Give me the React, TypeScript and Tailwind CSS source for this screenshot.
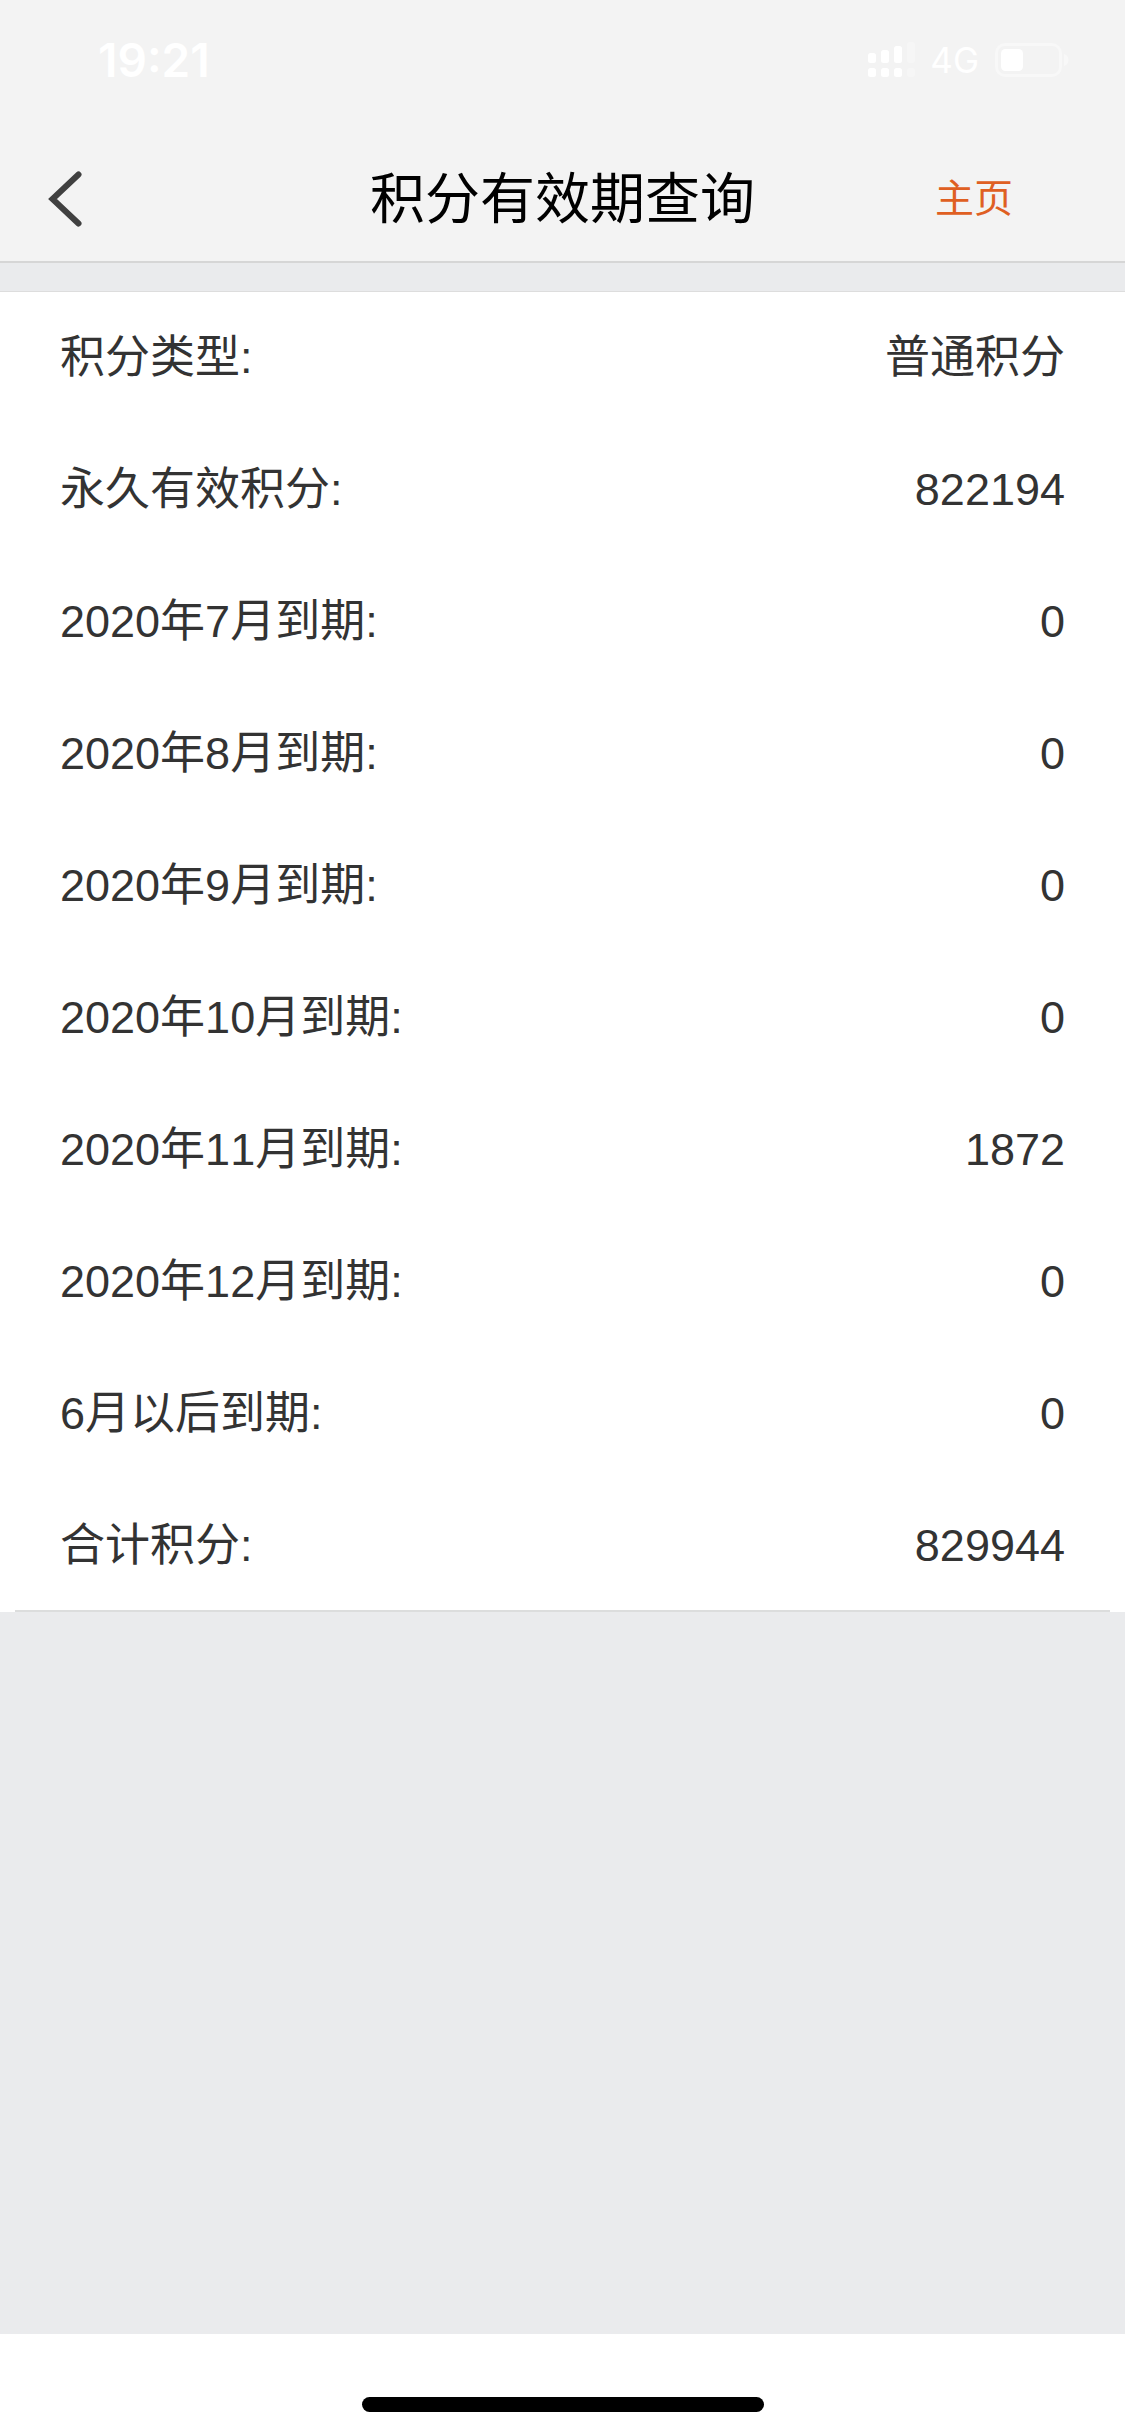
interface PointsRow {
  label: string;
  value: string;
}

const rows: PointsRow[] = [
  { label: '积分类型:', value: '普通积分' },
  { label: '永久有效积分:', value: '822194' },
  { label: '2020年7月到期:', value: '0' },
  { label: '2020年8月到期:', value: '0' },
  { label: '2020年9月到期:', value: '0' },
  { label: '2020年10月到期:', value: '0' },
  { label: '2020年11月到期:', value: '1872' },
  { label: '2020年12月到期:', value: '0' },
  { label: '6月以后到期:', value: '0' },
  { label: '合计积分:', value: '829944' },
];

function SignalIcon() {
  return (
    <svg width="48" height="36" viewBox="0 0 48 36" fill="currentColor" aria-hidden="true">
      <rect x="0" y="11" width="8" height="10" rx="2.5" />
      <rect x="13" y="8" width="8" height="13" rx="2.5" />
      <rect x="26" y="4" width="8" height="17" rx="2.5" />
      <rect x="39" y="0" width="8" height="21" rx="2.5" opacity="0.25" />
      <rect x="0" y="26" width="8" height="9" rx="2.5" />
      <rect x="13" y="26" width="8" height="9" rx="2.5" />
      <rect x="26" y="26" width="8" height="9" rx="2.5" />
      <rect x="39" y="26" width="8" height="9" rx="2.5" opacity="0.25" />
    </svg>
  );
}

function BatteryIcon() {
  return (
    <svg width="74" height="34" viewBox="0 0 74 34" aria-hidden="true">
      <rect x="1.5" y="1.5" width="64" height="31" rx="8.5" fill="none" stroke="currentColor" strokeWidth="3" opacity="0.4" />
      <path d="M69 11c3 1 4.5 3 4.5 6s-1.5 5-4.5 6z" fill="currentColor" opacity="0.45" />
      <rect x="6" y="6" width="22" height="22" rx="4.5" fill="currentColor" />
    </svg>
  );
}

function StatusBar() {
  return (
    <div className="flex h-[120px] items-center justify-between pr-14 pl-[98px] font-['Inter',sans-serif] text-white">
      <span className="text-[46px] leading-[48px] font-semibold">19:21</span>
      <div className="flex items-center">
        <SignalIcon />
        <span className="ml-3.5 text-[35px] leading-10">4G</span>
        <span className="ml-4">
          <BatteryIcon />
        </span>
      </div>
    </div>
  );
}

function NavBar() {
  return (
    <div className="grid h-[141px] grid-cols-[1fr_auto_1fr] items-center pt-4">
      <button type="button" aria-label="返回" className="flex h-full w-[132px] items-center pl-12 text-[#404040]">
        <svg width="36" height="56" viewBox="0 0 36 56" fill="none" aria-hidden="true">
          <path d="M30.5 3.5 4.5 28l26 24.5" stroke="currentColor" strokeWidth="6" strokeLinecap="round" />
        </svg>
      </button>
      <h1 className="text-[55px] leading-[72px] text-black">积分有效期查询</h1>
      <a href="#home" className="justify-self-end pr-[112px] text-[39px] leading-[52px] text-[#df5f22]">
        主页
      </a>
    </div>
  );
}

export default function App() {
  return (
    <div className="flex min-h-screen flex-col bg-[#eaebed] font-['Liberation_Sans','Noto_Sans_CJK_SC',sans-serif]">
      <header className="border-b-2 border-[#d6d6d6] bg-[#f3f3f3]">
        <StatusBar />
        <NavBar />
      </header>

      <main className="mt-7 grow">
        <div className="border-t border-[#dddddd] bg-white">
          <dl className="[font-kerning:none]">
            {rows.map((row) => (
              <div key={row.label} className="flex h-[132px] items-center justify-between px-[60px] text-[45px] leading-[60px] text-[#333333]">
                <dt>{row.label}</dt>
                <dd>{row.value}</dd>
              </div>
            ))}
          </dl>
          <div className="mx-[15px] -mt-0.5 h-0.5 bg-[#dcdddd]" />
        </div>
      </main>

      <footer className="flex h-[102px] items-end justify-center bg-white pb-6">
        <div className="h-[15px] w-[402px] rounded-full bg-black" />
      </footer>
    </div>
  );
}
